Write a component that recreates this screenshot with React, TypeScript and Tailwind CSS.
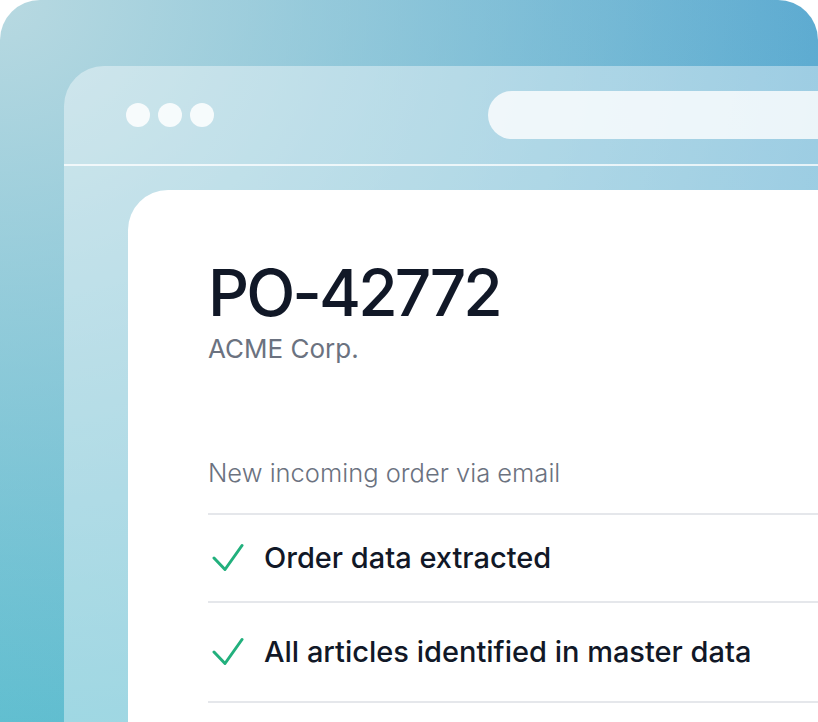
import React from 'react';

const steps = [
  { label: 'Order data extracted', h: 'h-[88px]' },
  { label: 'All articles identified in master data', h: 'h-[100px]' },
];

function Check() {
  return (
    <svg width="32" height="32" viewBox="0 0 32 32" fill="none" className="shrink-0">
      <path d="M2 16 L13 27.5 L30 3.5" stroke="#22b07d" strokeWidth="3" strokeLinecap="round" strokeLinejoin="round" />
    </svg>
  );
}

export default function App() {
  return (
    <div className="w-[818px] h-[722px] overflow-hidden bg-white font-['Inter','Liberation_Sans',sans-serif]">
      {/* outer backdrop */}
      <div className="h-full rounded-t-[40px] pl-16 pt-[66px] bg-[radial-gradient(ellipse_at_0%_0%,#b8d9e1_0%,rgba(184,217,225,0)_75%),linear-gradient(to_top_right,#5cbdcf,#58a8d0)]">
        {/* browser window */}
        <div className="h-full flex flex-col rounded-tl-[40px] bg-white/40">
          <div className="h-[98px] shrink-0 flex items-center pl-[62px]">
            <div className="flex gap-2">
              <span className="w-6 h-6 rounded-full bg-white/85" />
              <span className="w-6 h-6 rounded-full bg-white/85" />
              <span className="w-6 h-6 rounded-full bg-white/85" />
            </div>
            <div className="ml-auto w-[330px] h-12 rounded-l-full bg-white/80" />
          </div>
          <div className="h-[2px] shrink-0 bg-white/75" />

          <div className="flex-1 pt-6 pl-16">
            {/* card */}
            <div className="h-full rounded-tl-[40px] bg-white pl-20 pt-[71px]">
              <h1 className="text-[64px] leading-[64px] font-medium tracking-[-0.045em] text-[#111827]">PO-42772</h1>
              <p className="mt-2 text-[26px] leading-8 text-[#6b7280]">ACME Corp.</p>

              <p className="mt-[92px] text-[25.5px] leading-8 font-light text-[#6b7280]">New incoming order via email</p>

              <div className="mt-6 border-t-2 border-[#e5e7eb]">
                {steps.map(s => (
                  <div key={s.label} className={`${s.h} flex items-center gap-5 pl-1 border-b-2 border-[#e5e7eb]`}>
                    <Check />
                    <span className="text-[29px] leading-9 font-medium text-[#111827]">{s.label}</span>
                  </div>
                ))}
              </div>
            </div>
          </div>
        </div>
      </div>
    </div>
  );
}
